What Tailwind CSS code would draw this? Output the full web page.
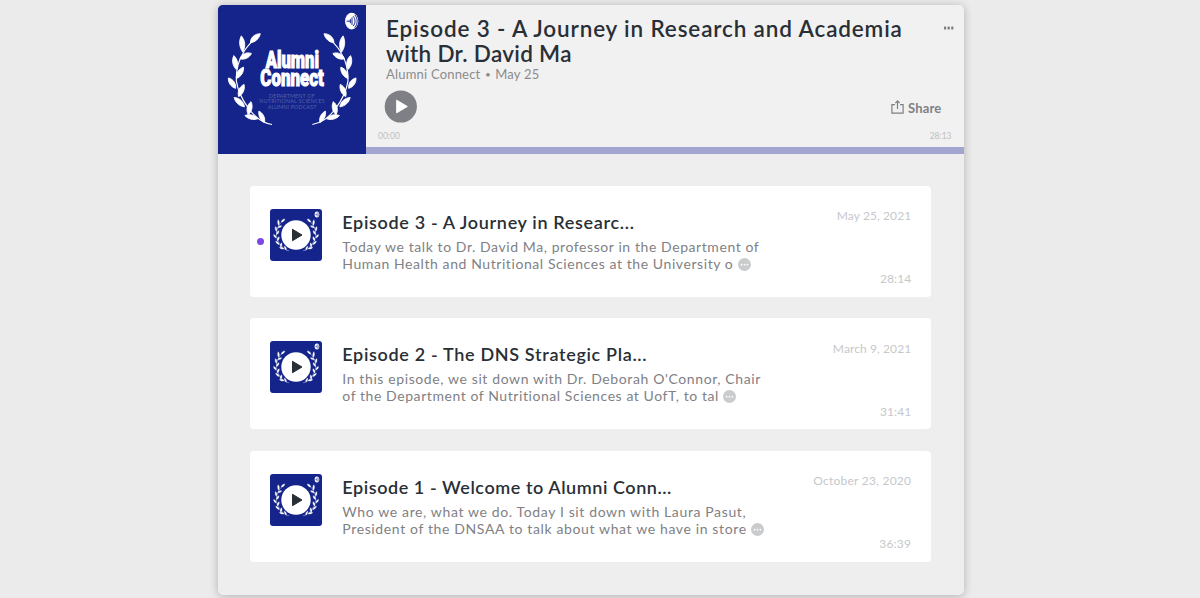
<!DOCTYPE html>
<html lang="en">
<head>
  <meta charset="UTF-8">
  <title>Alumni Connect</title>
  <script src="https://cdn.jsdelivr.net/npm/@tailwindcss/browser@4"></script>
</head>
<body class="bg-[#ebebeb] h-[598px] overflow-hidden font-['Lato',sans-serif] text-[#292f36]">
  <!-- shared artwork -->
  <svg class="hidden">
    <symbol id="wreath" viewBox="24 16 444 444">
      <path d="M136 114 C118 132 104 146 99 160 C84 184 78 210 79 242 C84 276 96 298 116 325 C134 350 156 368 186 373" fill="none" stroke="#fff" stroke-width="3.5" />
      <g fill="#fff" stroke="#fff" stroke-width="2.5" stroke-linejoin="round">
        <path d="M-20 0 C-10 -11 8 -11 20 0 C8 9 -10 9 -20 0Z" transform="translate(136 114) rotate(-42)" />
        <path d="M-25 0 C-10 -11 8 -11 24 0 C8 9 -10 9 -25 0Z" transform="translate(96 132) rotate(85)" />
        <path d="M-19 0 C-8 -11 8 -11 19 0 C8 9 -8 9 -19 0Z" transform="translate(107 168) rotate(-25)" />
        <path d="M-21 0 C-8 -10 8 -10 21 0 C8 9 -8 9 -21 0Z" transform="translate(75 187) rotate(80)" />
        <path d="M-20 0 C-8 -10 8 -10 20 0 C8 9 -8 9 -20 0Z" transform="translate(90 218) rotate(-58)" />
        <path d="M-19 0 C-8 -10 8 -10 19 0 C8 9 -8 9 -19 0Z" transform="translate(66 249) rotate(55)" />
        <path d="M-20 0 C-8 -10 8 -10 20 0 C8 9 -8 9 -20 0Z" transform="translate(94 271) rotate(-66)" />
        <path d="M-21 0 C-8 -10 8 -10 21 0 C8 9 -8 9 -21 0Z" transform="translate(88 306) rotate(42)" />
        <path d="M-20 0 C-8 -10 8 -10 20 0 C8 9 -8 9 -20 0Z" transform="translate(119 324) rotate(-78)" />
        <path d="M-20 0 C-8 -9 8 -9 20 0 C8 8 -8 8 -20 0Z" transform="translate(124 351) rotate(14)" />
        <path d="M-19 0 C-8 -9 8 -9 19 0 C8 8 -8 8 -19 0Z" transform="translate(155 350) rotate(64)" />
      </g>
    </symbol>
    <symbol id="cover" viewBox="24 16 444 444">
      <rect x="24" y="16" width="444" height="444" fill="#14248a" />
      <use href="#wreath" x="24" y="16" width="444" height="444" />
      <g transform="translate(493 0) scale(-1 1)">
        <use href="#wreath" x="24" y="16" width="444" height="444" />
      </g>
      <g fill="#fff" stroke="#fff" stroke-width="3" font-family="Roboto, sans-serif" font-weight="900" font-size="66">
        <text transform="translate(167 204) scale(.74 1.08)" textLength="216" lengthAdjust="spacingAndGlyphs">Alumni</text>
        <text transform="translate(151 256) scale(.74 1.08)" textLength="257" lengthAdjust="spacingAndGlyphs">Connect</text>
      </g>
      <g fill="#5560a8" font-family="Lato, sans-serif" font-size="16">
        <text x="177" y="293" textLength="137">DEPARTMENT OF</text>
        <text x="148" y="310" textLength="196">NUTRITIONAL SCIENCES</text>
        <text x="173" y="327" textLength="146">ALUMNI PODCAST</text>
      </g>
      <ellipse cx="425" cy="63" rx="20" ry="25" fill="#fff" />
      <g fill="none" stroke="#14248a" stroke-width="3" stroke-linecap="round">
        <path d="M411 63h9M421 58v10M426 53v20" />
        <path d="M430 49c7 7 7 21 0 28M435 45c9 9 9 27 0 36" />
      </g>
    </symbol>
    <symbol id="more" viewBox="0 0 13 13">
      <circle cx="6.5" cy="6.5" r="6.5" fill="#c9cbcd" />
      <g fill="#fff"><circle cx="3.6" cy="6.7" r=".9" /><circle cx="6.5" cy="6.7" r=".9" /><circle cx="9.4" cy="6.7" r=".9" /></g>
    </symbol>
    <symbol id="play" viewBox="0 0 30 30">
      <circle cx="15" cy="15" r="14.7" fill="#fff" />
      <path d="M11.5 9.3v11.4L21 15z" fill="#292f36" stroke="#292f36" stroke-linejoin="round" />
    </symbol>
  </svg>

  <div class="pt-[5px]">
    <main class="ml-[218px] w-[745.5px] h-[589.5px] bg-[#eeeeee] rounded-[5px] overflow-hidden shadow-[0_1px_8px_rgba(0,0,0,0.25)]">
      <header class="flex h-[149px] bg-[#f1f1f1]">
        <svg class="w-[148px] h-[149px] shrink-0 bg-[#14248a]"><use href="#cover" /></svg>
        <div class="flex-1 flex flex-col">
          <div class="flex justify-between pl-5 pr-[10px] pt-[11px]">
            <h1 class="text-[22.5px] leading-[25px] font-semibold tracking-[0.85px] whitespace-nowrap">Episode 3 - A Journey in Research and Academia<br><span class="tracking-[0.3px]">with Dr. David Ma</span></h1>
            <svg class="w-[10px] h-[4px] mt-[10px]" viewBox="0 0 10 4" fill="#7b7e82"><rect x="0" y=".5" width="2.2" height="3" rx=".6" /><rect x="3.6" y=".5" width="2.2" height="3" rx=".6" /><rect x="7.2" y=".5" width="2.2" height="3" rx=".6" /></svg>
          </div>
          <p class="flex items-center gap-[4.5px] pl-5 pt-px text-[13px] leading-[15px] tracking-[0.2px] text-[#8b8c8e]">
            <span>Alumni Connect</span>
            <span class="text-[10px] tracking-normal">•</span>
            <span>May 25</span>
          </p>
          <div class="flex justify-between items-center pl-[18px] pr-[22px] mt-[7px] h-[34px]">
            <svg class="w-[33px] h-[33px]" viewBox="0 0 33 33"><circle cx="16.8" cy="16.5" r="16.1" fill="#7f8086" /><path d="M12.7 10.2v12.6L23.3 16.5z" fill="#fff" stroke="#fff" stroke-linejoin="round" /></svg>
            <div class="flex items-center gap-1 mt-[5px] text-[13px] font-bold tracking-[0.2px] text-[#7f8086]">
              <svg class="w-[13px] h-[14px] -mt-[3px]" viewBox="0 0 13 14" fill="none" stroke="#7f8086" stroke-width="1.2"><path d="M4 4.6H.9v8.6h11.2V4.6H9M6.5 9V1M4.3 3.1 6.5.9l2.2 2.2" /></svg>
              <span>Share</span>
            </div>
          </div>
          <div class="flex justify-between pl-3 pr-[12px] mt-[7px] text-[8.5px] leading-[12px] text-[#bfc0c2]">
            <span>00:00</span><span>28:13</span>
          </div>
          <div class="h-[7px] mt-auto bg-[#a1a5d0]"></div>
        </div>
      </header>

      <ul class="pl-8 pt-[31.7px] space-y-[21.2px]">
        <li class="flex w-[681.3px] h-[111.3px] bg-white rounded-[4px] pl-[7.3px] pr-5">
          <span class="w-[7px] h-[7px] mt-[52px] rounded-full bg-[#7f47e8]"></span>
          <div class="grid place-items-center w-[52px] h-[52px] ml-[6px] mt-[23px] rounded-[3px] overflow-hidden">
            <svg class="col-start-1 row-start-1 w-[52px] h-[52px]"><use href="#cover" /></svg>
            <svg class="col-start-1 row-start-1 w-[30px] h-[30px]"><use href="#play" /></svg>
          </div>
          <div class="ml-5 pt-[25px] whitespace-nowrap">
            <h2 class="text-[18px] leading-[23px] font-semibold tracking-[0.66px]">Episode 3 - A Journey in Researc...</h2>
            <p class="mt-[4px] text-[14px] leading-[17px] tracking-[0.58px] text-[#7f8185]">Today we talk to Dr. David Ma, professor in the Department of<br>Human Health and Nutritional Sciences at the University o <svg class="inline w-[13px] h-[13px] align-[-2px]"><use href="#more" /></svg></p>
          </div>
          <div class="ml-auto flex flex-col justify-between items-end pt-[21px] pb-[10px] text-[12px] leading-[17px] tracking-[0.1px] text-[#c6c8ca]"><span>May 25, 2021</span><span>28:14</span></div>
        </li>
        <li class="flex w-[681.3px] h-[111.3px] bg-white rounded-[4px] pl-[20.3px] pr-5">
          <div class="grid place-items-center w-[52px] h-[52px] mt-[23px] rounded-[3px] overflow-hidden">
            <svg class="col-start-1 row-start-1 w-[52px] h-[52px]"><use href="#cover" /></svg>
            <svg class="col-start-1 row-start-1 w-[30px] h-[30px]"><use href="#play" /></svg>
          </div>
          <div class="ml-5 pt-[25px] whitespace-nowrap">
            <h2 class="text-[18px] leading-[23px] font-semibold tracking-[0.67px]">Episode 2 - The DNS Strategic Pla...</h2>
            <p class="mt-[4px] text-[14px] leading-[17px] tracking-[0.61px] text-[#7f8185]">In this episode, we sit down with Dr. Deborah O'Connor, Chair<br><span class="tracking-[0.57px]">of the Department of Nutritional Sciences at UofT, to tal </span><svg class="inline w-[13px] h-[13px] align-[-2px]"><use href="#more" /></svg></p>
          </div>
          <div class="ml-auto flex flex-col justify-between items-end pt-[21.5px] pb-[9.5px] text-[12px] leading-[17px] tracking-[0.1px] text-[#c6c8ca]"><span>March 9, 2021</span><span>31:41</span></div>
        </li>
        <li class="flex w-[681.3px] h-[111.3px] bg-white rounded-[4px] pl-[20.3px] pr-5">
          <div class="grid place-items-center w-[52px] h-[52px] mt-[23px] rounded-[3px] overflow-hidden">
            <svg class="col-start-1 row-start-1 w-[52px] h-[52px]"><use href="#cover" /></svg>
            <svg class="col-start-1 row-start-1 w-[30px] h-[30px]"><use href="#play" /></svg>
          </div>
          <div class="ml-5 pt-[25px] whitespace-nowrap">
            <h2 class="text-[18px] leading-[23px] font-semibold tracking-[0.56px]">Episode 1 - Welcome to Alumni Conn...</h2>
            <p class="mt-[4px] text-[14px] leading-[17px] tracking-[0.63px] text-[#7f8185]">Who we are, what we do. Today I sit down with Laura Pasut,<br>President of the DNSAA to talk about what we have in store <svg class="inline w-[13px] h-[13px] align-[-2px]"><use href="#more" /></svg></p>
          </div>
          <div class="ml-auto flex flex-col justify-between items-end pt-[21px] pb-[9.5px] text-[12px] leading-[17px] tracking-[0.25px] text-[#c6c8ca]"><span>October 23, 2020</span><span>36:39</span></div>
        </li>
      </ul>
    </main>
  </div>
</body>
</html>
